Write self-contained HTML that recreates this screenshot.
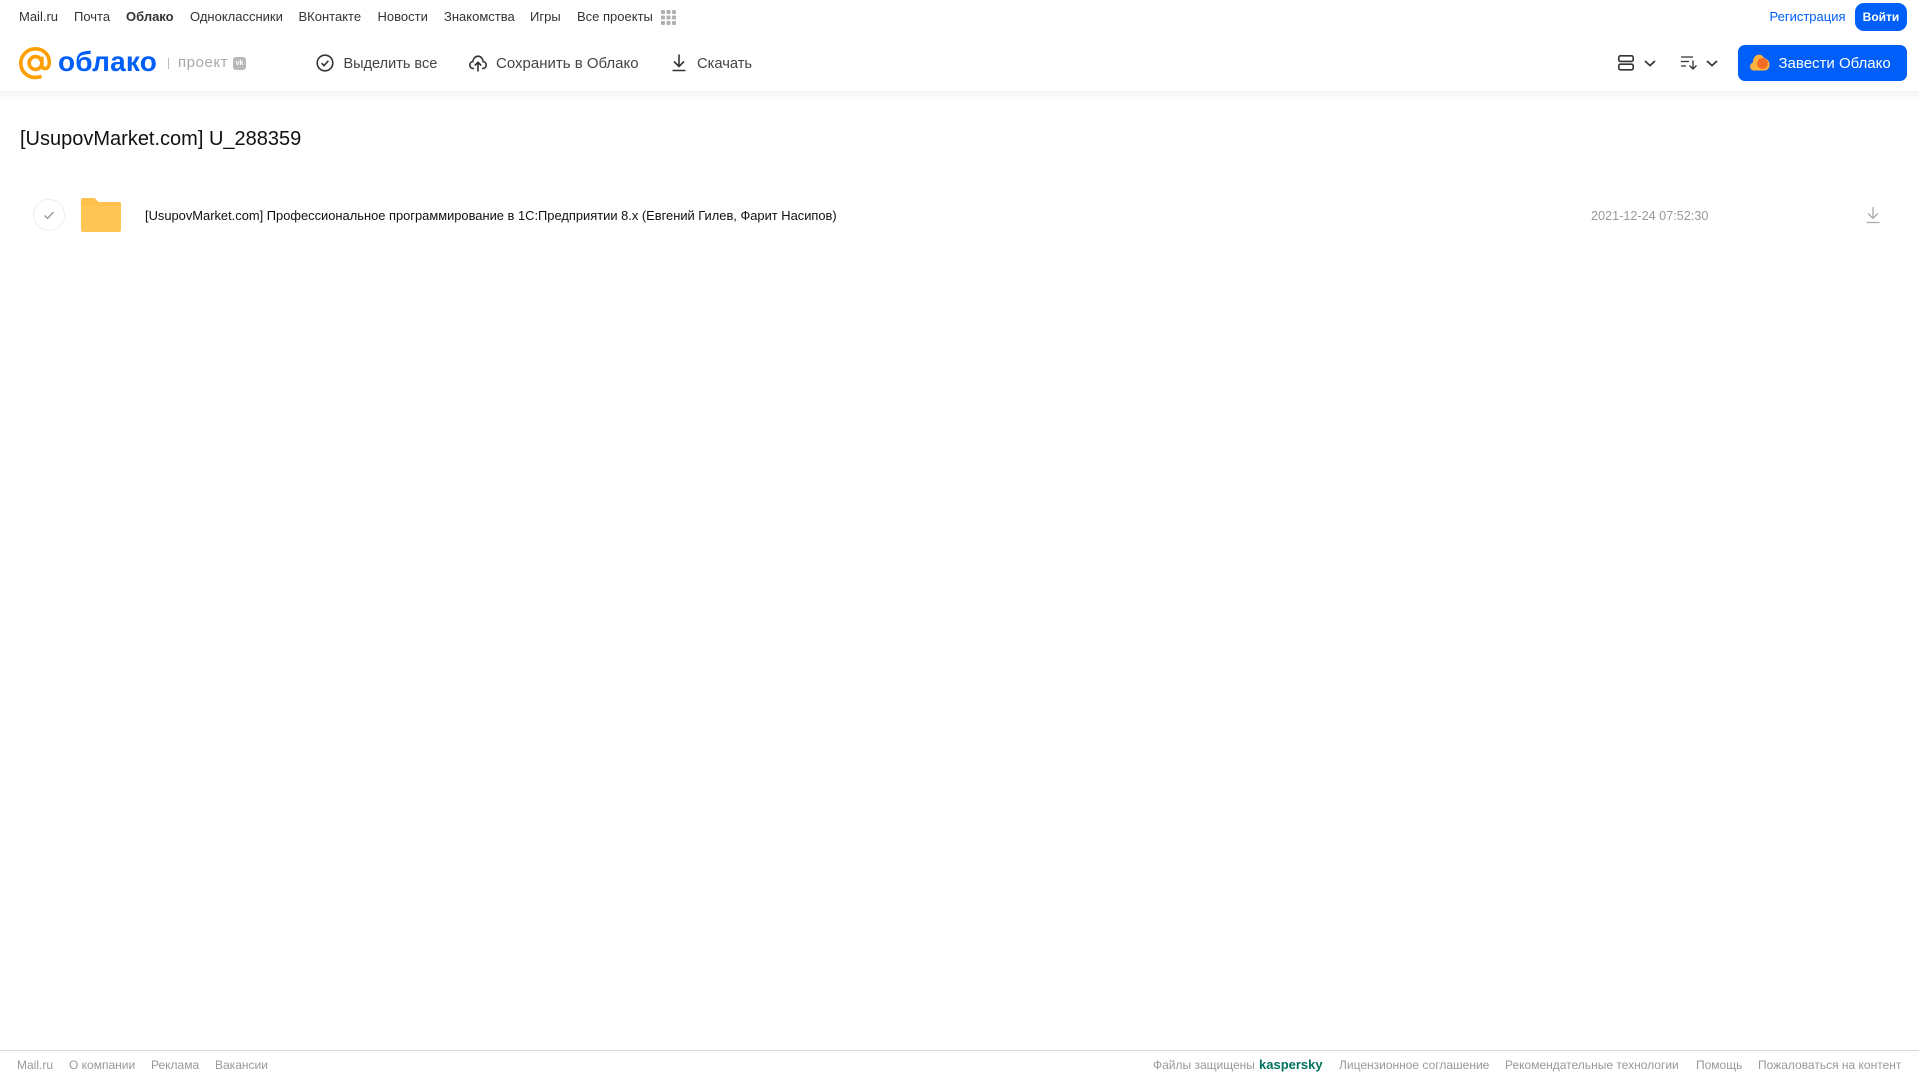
<!DOCTYPE html>
<html lang="ru">
<head>
<meta charset="utf-8">
<title>Облако</title>
<style>
html,body{margin:0;padding:0;background:#fff}
body{width:1919px;height:1079px;position:relative;overflow:hidden;font-family:"Liberation Sans",Arial,sans-serif}
.t{position:absolute;white-space:nowrap;line-height:16px}
.n{font-size:13px;color:#333;top:9px}
.a{font-size:14.5px;color:#444;top:55px}
.f{font-size:12px;color:#999;top:1057px}
svg{position:absolute;overflow:visible}
</style>
</head>
<body>
<div class="t n" style="left:19px">Mail.ru</div>
<div class="t n" style="left:74px">Почта</div>
<div class="t n" style="left:126px;font-weight:bold;color:#333">Облако</div>
<div class="t n" style="left:190px">Одноклассники</div>
<div class="t n" style="left:298.5px">ВКонтакте</div>
<div class="t n" style="left:377.5px">Новости</div>
<div class="t n" style="left:444px">Знакомства</div>
<div class="t n" style="left:530px">Игры</div>
<div class="t n" style="left:577px">Все проекты</div>
<svg style="left:661px;top:10px" width="15" height="15" fill="#b0b0b0">
<rect x="0" y="0" width="4" height="4" rx="1"/><rect x="5.5" y="0" width="4" height="4" rx="1"/><rect x="11" y="0" width="4" height="4" rx="1"/>
<rect x="0" y="5.5" width="4" height="4" rx="1"/><rect x="5.5" y="5.5" width="4" height="4" rx="1"/><rect x="11" y="5.5" width="4" height="4" rx="1"/>
<rect x="0" y="11" width="4" height="4" rx="1"/><rect x="5.5" y="11" width="4" height="4" rx="1"/><rect x="11" y="11" width="4" height="4" rx="1"/>
</svg>
<div class="t n" style="left:1769.5px;color:#005ff9">Регистрация</div>
<div style="position:absolute;left:1855px;top:3px;width:52px;height:28px;background:#005ff9;border-radius:9px"></div>
<div class="t" style="left:1855px;top:9px;width:52px;text-align:center;font-size:12px;color:#fff;font-weight:bold">Войти</div>

<div style="position:absolute;left:0;top:91px;width:1919px;height:10px;background:linear-gradient(#f3f3f3,#fff)"></div>

<svg style="left:19px;top:47px" width="33" height="33" viewBox="0 0 33 33" fill="none" stroke="#ff9e00" stroke-width="3.6">
<circle cx="16.5" cy="16" r="6.4"/>
<path d="M22.9 9.8V18.5C22.9 22.8 29.6 22.8 30.2 17.2C31.2 8 24.6 1.8 16.5 1.8C8.4 1.8 1.8 8.2 1.8 16.2C1.8 24.8 9.6 33.4 22.5 29.4"/>
</svg>
<div class="t" style="left:58px;top:45px;line-height:34px;font-size:28px;color:#005ff9;font-weight:bold;letter-spacing:.2px">облако</div>
<div style="position:absolute;left:168px;top:58px;width:1px;height:11px;background:#bbb"></div>
<div class="t" style="left:178px;top:55px;font-size:15px;color:#a8a8a8;letter-spacing:.55px">проект</div>
<div style="position:absolute;left:233px;top:57px;width:13px;height:13px;border-radius:3px;background:#b8b8b8"></div>
<div class="t" style="left:233px;top:57px;width:13px;text-align:center;font-size:7px;line-height:13px;font-weight:bold;color:#fff">vk</div>

<svg style="left:316px;top:54px" width="18" height="18" viewBox="0 0 18 18" fill="none" stroke="#333" stroke-width="1.6">
<circle cx="9" cy="9" r="7.8"/><path d="M5.6 9.2L8 11.6L12.4 6.8"/>
</svg>
<div class="t a" style="left:343.5px;top:55.5px">Выделить все</div>
<svg style="left:469px;top:54px" width="18" height="18" viewBox="0 0 18 18" fill="none" stroke="#333" stroke-width="1.6">
<path d="M5 14.5H4.5C2 14.5 .8 12.8 .8 11C.8 9.2 2.2 7.8 3.8 7.6C4.2 4.4 6.4 2.2 9 2.2C11.6 2.2 13.8 4.4 14.2 7.6C15.8 7.8 17.2 9.2 17.2 11C17.2 12.8 16 14.5 13.5 14.5H13"/>
<path d="M9 17.5V8.5M5.8 11.5L9 8.3L12.2 11.5"/>
</svg>
<div class="t a" style="left:496px;top:55.5px;font-size:15px">Сохранить в Облако</div>
<svg style="left:672px;top:54px" width="14" height="18" viewBox="0 0 14 18" fill="none" stroke="#333" stroke-width="1.6">
<path d="M7 .5V12M2 7.5L7 12.5L12 7.5M.5 16.5H13.5"/>
</svg>
<div class="t a" style="left:697px;top:55.5px;font-size:14.7px">Скачать</div>

<svg style="left:1618px;top:55px" width="16" height="16" viewBox="0 0 16 16" fill="none" stroke="#333" stroke-width="1.6">
<rect x=".8" y=".8" width="14.4" height="5.6" rx="1.6"/><rect x=".8" y="9.2" width="14.4" height="5.6" rx="1.6"/>
</svg>
<svg style="left:1644px;top:60px" width="12" height="7" viewBox="0 0 12 7" fill="none" stroke="#333" stroke-width="1.7"><path d="M1 1L6 5.6L11 1"/></svg>
<svg style="left:1681px;top:56px" width="16" height="14" viewBox="0 0 16 14" fill="none" stroke="#333" stroke-width="1.3">
<path d="M0 1H12M0 5.5H8M0 10H5M12 4.5V13M8.5 9.5L12 13L15.5 9.5"/>
</svg>
<svg style="left:1706px;top:60px" width="12" height="7" viewBox="0 0 12 7" fill="none" stroke="#333" stroke-width="1.7"><path d="M1 1L6 5.6L11 1"/></svg>

<div style="position:absolute;left:1738px;top:45px;width:169px;height:36px;background:#005ff9;border-radius:7px"></div>
<svg style="left:1750px;top:54px" width="20" height="17" viewBox="0 0 20 17">
<path d="M4 16.5C1.5 16.5 0 14.6 0 12.5C0 10.6 1.2 9.2 2.8 8.6C3 4 5.5 .6 9 .6C11.4 .6 13 2 14 4C17.4 4.6 19.6 7.6 19.6 10.8C19.6 14 17.4 16.5 14.5 16.5Z" fill="#ffb13d"/>
<circle cx="12.5" cy="9.5" r="5.4" fill="#f46c24"/>
</svg>
<div class="t a" style="left:1778.5px;top:55.5px;font-size:15px;color:#fff">Завести Облако</div>

<div class="t" style="left:20px;top:125px;line-height:28px;font-size:20px;color:#111">[UsupovMarket.com] U_288359</div>

<svg style="left:33px;top:199px" width="32" height="32" viewBox="0 0 32 32" fill="none">
<circle cx="16" cy="16" r="15.5" stroke="#eeeeee"/><path d="M11.5 16.5L14.6 19.4L20.5 13" stroke="#999" stroke-width="1.4"/>
</svg>
<svg style="left:81px;top:198px" width="40" height="34" viewBox="0 0 40 34">
<path d="M2 0H12C14 0 15 1 16 2.5C16.8 3.6 17.5 4 19 4H38C39.2 4 40 4.8 40 6V10H0V2C0 .8 .8 0 2 0Z" fill="#ffc04d"/>
<path d="M0 8H40V32C40 33.2 39.2 34 38 34H2C.8 34 0 33.2 0 32Z" fill="#ffc555"/>
</svg>
<div class="t" style="left:145px;top:207.5px;font-size:12.9px;color:#111">[UsupovMarket.com] Профессиональное программирование в 1С:Предприятии 8.x (Евгений Гилев, Фарит Насипов)</div>
<div class="t" style="left:1591px;top:207.5px;font-size:12.65px;color:#999">2021-12-24 07:52:30</div>
<svg style="left:1866px;top:207px" width="14" height="17" viewBox="0 0 14 17" fill="none" stroke="#aaa" stroke-width="1.3">
<path d="M7 0V11M2.2 6.5L7 11.3L11.8 6.5M.5 15.5H13.5"/>
</svg>

<div style="position:absolute;left:0;top:1050px;width:1919px;height:1px;background:#d8d8d8"></div>
<div class="t f" style="left:17px">Mail.ru</div>
<div class="t f" style="left:69px">О компании</div>
<div class="t f" style="left:151px">Реклама</div>
<div class="t f" style="left:215px">Вакансии</div>
<div class="t f" style="left:1153px">Файлы защищены</div>
<div class="t f" style="left:1259px;font-size:13px;font-weight:bold;color:#00735f">kaspersky</div>
<div class="t f" style="left:1339px">Лицензионное соглашение</div>
<div class="t f" style="left:1505px">Рекомендательные технологии</div>
<div class="t f" style="left:1696px">Помощь</div>
<div class="t f" style="left:1758px">Пожаловаться на контент</div>
</body>
</html>
